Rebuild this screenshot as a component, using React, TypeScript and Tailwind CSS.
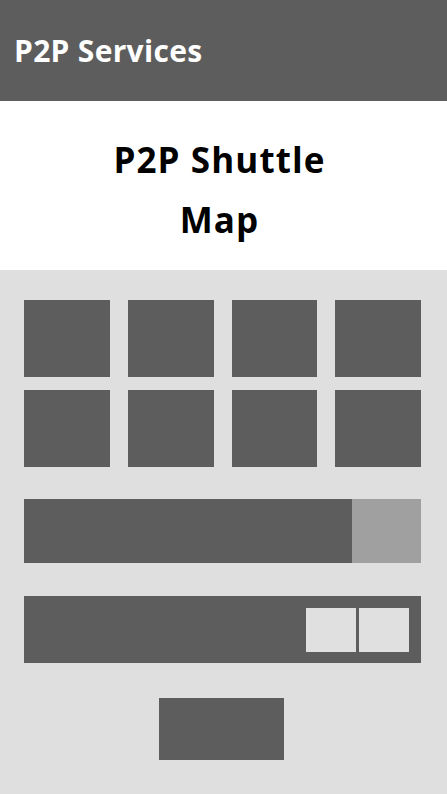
export default function App() {
  const tiles = Array.from({ length: 8 });

  return (
    <main className="w-[447px] h-[794px] flex flex-col bg-[#dfdfdf] font-['Open_Sans',sans-serif]">
      {/* Header */}
      <header className="h-[101px] shrink-0 bg-[#5d5d5d] flex items-center px-[14px]">
        <h1 className="text-white text-[30px] font-bold tracking-[0.3px]">P2P Services</h1>
      </header>

      {/* Title */}
      <section className="h-[169px] shrink-0 bg-white flex items-center justify-center">
        <h2 className="text-black text-[35px] font-bold leading-[60px] text-center tracking-[1.1px] pt-[8px] pr-[8px]">
          P2P Shuttle
          <br />
          Map
        </h2>
      </section>

      {/* Content */}
      <section className="flex-1 pt-[30px] pl-[24px] pr-[26px]">
        <div className="grid grid-cols-4 gap-x-[18px] gap-y-[13px]">
          {tiles.map((_, i) => (
            <div key={i} className="h-[77px] bg-[#5d5d5d]" />
          ))}
        </div>

        <div className="mt-[32px] h-[64px] flex">
          <div className="flex-1 bg-[#5d5d5d]" />
          <div className="w-[69px] bg-[#a0a0a0]" />
        </div>

        <div className="mt-[33px] h-[67px] bg-[#5d5d5d] flex items-center justify-end pr-[12px] gap-[3px]">
          <div className="w-[50px] h-[44px] bg-[#e0e0e0]" />
          <div className="w-[50px] h-[44px] bg-[#e0e0e0]" />
        </div>

        <div className="mt-[35px] flex justify-center">
          <button className="w-[125px] h-[62px] bg-[#5d5d5d] ml-[-2px]" />
        </div>
      </section>
    </main>
  );
}
